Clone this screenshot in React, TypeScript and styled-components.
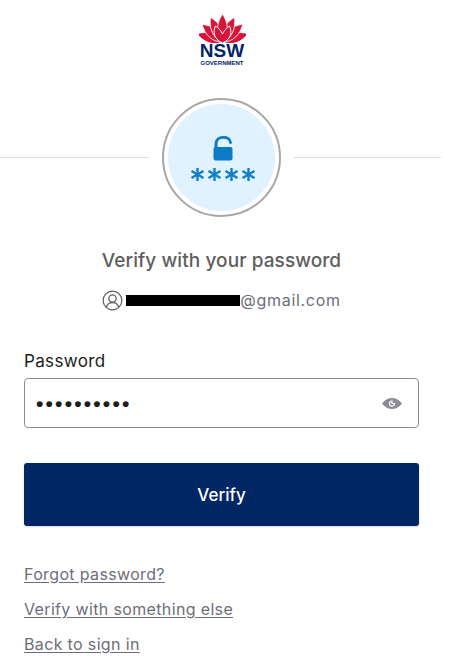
import React from "react";
import styled, { createGlobalStyle } from "styled-components";

const GlobalStyle = createGlobalStyle`
  html, body {
    margin: 0;
    padding: 0;
    background: #fff;
    font-family: "Inter", "Liberation Sans", sans-serif;
  }
`;

const Page = styled.div`
  width: 443px;
  height: 670px;
  overflow: hidden;
  display: flex;
  flex-direction: column;
`;

const Header = styled.header`
  display: flex;
  flex-direction: column;
  align-items: center;
  padding: 13px 0 0 1px;
  height: 85px;
  box-sizing: border-box;
`;

const LogoWord = styled.div`
  color: #002664;
  font: 700 19px/14px "Liberation Sans", sans-serif;
  text-align: center;
  margin-top: 1px;
`;

const LogoSub = styled.div`
  color: #002664;
  font: 700 6px/6px "Liberation Sans", sans-serif;
  text-align: center;
  margin-top: 2px;
`;

const BadgeRow = styled.div`
  display: flex;
  align-items: center;
  gap: 13px;
  width: 441px;
  height: 120px;
  margin-top: 12px;
`;

const Rule = styled.div<{ $width?: number }>`
  flex: ${(p) => (p.$width ? `0 0 ${p.$width}px` : "1")};
  height: 1px;
  background: #dcdcdc;
`;

const Badge = styled.div`
  width: 119px;
  height: 119px;
  box-sizing: border-box;
  border: 2px solid #a7a7a7;
  border-radius: 50%;
  padding: 4px;
  flex: none;
`;

const BadgeInner = styled.div`
  width: 100%;
  height: 100%;
  border-radius: 50%;
  background: #e0f2ff;
  display: flex;
  align-items: center;
  justify-content: center;
  padding-top: 4px;
  box-sizing: border-box;
`;

const Title = styled.h2`
  margin: 31px 0 0;
  height: 26px;
  color: #5e5e5e;
  font-size: 19px;
  line-height: 26px;
  font-weight: 500;
  letter-spacing: 0.08px;
  text-align: center;
`;

const Identity = styled.div`
  display: flex;
  align-items: center;
  justify-content: center;
  margin-top: 14px;
  height: 24px;
  color: #6e6e78;
  font-size: 16px;
  letter-spacing: 0.7px;
`;

const Redacted = styled.span`
  display: inline-block;
  width: 114px;
  height: 11px;
  background: #000;
  margin-left: 3px;
`;

const Form = styled.form`
  display: flex;
  flex-direction: column;
  padding: 0 24px;
  margin-top: 37px;
`;

const Label = styled.label`
  color: #1d1d21;
  font-size: 17px;
  line-height: 24px;
  font-weight: 400;
  letter-spacing: 0.35px;
  margin-bottom: 5px;
`;

const InputBox = styled.div`
  height: 50px;
  box-sizing: border-box;
  border: 1px solid #8c8c96;
  border-radius: 4px;
  display: flex;
  align-items: center;
  justify-content: space-between;
  padding: 0 16px 0 11px;
`;

const Dots = styled.span`
  color: #1d1d21;
  font: 700 21px/1 "Liberation Sans", sans-serif;
  letter-spacing: 2.2px;
`;

const Submit = styled.button`
  margin-top: 35px;
  height: 63px;
  border: none;
  border-radius: 3px;
  background: #002664;
  color: #fff;
  font: 500 17px "Inter", sans-serif;
  box-shadow: 0 1px 2px rgba(0, 0, 0, 0.15);
`;

const Links = styled.nav`
  display: flex;
  flex-direction: column;
  gap: 11px;
  padding: 0 24px;
  margin-top: 36px;
`;

const Link = styled.a`
  color: #6e6e78;
  font-size: 16px;
  line-height: 24px;
  letter-spacing: 0.35px;
  text-decoration: underline;
  text-underline-offset: 2px;
`;

// angle from the flower base, and how far the tip reaches
const petals = [
  { angle: -72, tip: 2 },
  { angle: 72, tip: 2 },
  { angle: -49, tip: 2 },
  { angle: 49, tip: 2 },
  { angle: -26, tip: 1.5 },
  { angle: 26, tip: 1.5 },
  { angle: 0, tip: 1 },
];

const Waratah = () => (
  <svg width="47" height="30" viewBox="0 0 47 30">
    {petals.map(({ angle, tip }) => (
      <path
        key={angle}
        transform={`rotate(${angle} 23.5 29)`}
        d={`M23.5 29 C16.5 21 17.5 ${tip + 9} 23.5 ${tip} C29.5 ${tip + 9} 30.5 21 23.5 29Z`}
        fill="#d7153a"
        stroke="#fff"
        strokeWidth="0.8"
      />
    ))}
    <path
      d="M23.5 30 C14 26 14 18 16.5 13 C19.5 15 22 17.5 23.5 21 C25 17.5 27.5 15 30.5 13 C33 18 33 26 23.5 30Z"
      fill="#d7153a"
      stroke="#fff"
      strokeWidth="1"
    />
  </svg>
);

const LockAsterisks = () => (
  <svg width="66" height="47" viewBox="0 0 66 47" fill="none">
    <path d="M27 12 V7.5 C27 -0.5 41 -0.5 41.5 6.5" stroke="#0a7bc4" strokeWidth="3" strokeLinecap="round" />
    <rect x="24.5" y="11" width="19" height="13.5" rx="2" fill="#0a7bc4" />
    {[8.5, 25.5, 42.5, 59.5].map((x) => (
      <g key={x} stroke="#0f80c8" strokeWidth="2.4" strokeLinecap="butt">
        <path d={`M${x} 32 V45`} />
        <path d={`M${x - 6} 35 L${x + 6} 42`} />
        <path d={`M${x + 6} 35 L${x - 6} 42`} />
      </g>
    ))}
  </svg>
);

const UserIcon = () => (
  <svg width="21" height="21" viewBox="0 0 22 22" fill="none" stroke="#5e5e66" strokeWidth="1.3">
    <circle cx="11" cy="11" r="9.8" />
    <circle cx="11" cy="9" r="3.8" />
    <path d="M4.5 18 C5.5 14.5 8 13.2 11 13.2 C14 13.2 16.5 14.5 17.5 18" />
  </svg>
);

const EyeIcon = () => (
  <svg width="20" height="11" viewBox="0 0 20 11">
    <path d="M0 5.5 C3 1.5 6.5 0 10 0 C13.5 0 17 1.5 20 5.5 C17 9.5 13.5 11 10 11 C6.5 11 3 9.5 0 5.5Z" fill="#8c8c96" />
    <path d="M10 3 A2.6 2.6 0 1 0 12.6 5.5 H10Z" fill="none" stroke="#fff" strokeWidth="1.2" />
  </svg>
);

export default function App() {
  return (
    <Page>
      <GlobalStyle />
      <Header>
        <Waratah />
        <LogoWord>NSW</LogoWord>
        <LogoSub>GOVERNMENT</LogoSub>
      </Header>
      <BadgeRow>
        <Rule $width={149} />
        <Badge>
          <BadgeInner>
            <LockAsterisks />
          </BadgeInner>
        </Badge>
        <Rule />
      </BadgeRow>
      <Title>Verify with your password</Title>
      <Identity>
        <UserIcon />
        <Redacted />
        @gmail.com
      </Identity>
      <Form>
        <Label>Password</Label>
        <InputBox>
          <Dots>••••••••••</Dots>
          <EyeIcon />
        </InputBox>
        <Submit type="button">Verify</Submit>
      </Form>
      <Links>
        <Link href="#">Forgot password?</Link>
        <Link href="#">Verify with something else</Link>
        <Link href="#">Back to sign in</Link>
      </Links>
    </Page>
  );
}
